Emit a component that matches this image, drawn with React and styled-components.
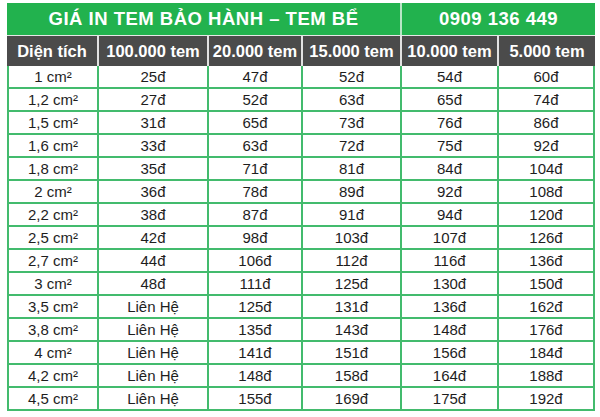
import React from "react";
import styled, { createGlobalStyle } from "styled-components";

const GlobalStyle = createGlobalStyle`
  body {
    margin: 0;
    background: #ffffff;
    font-family: "Liberation Sans", Arial, sans-serif;
  }
`;

const GREEN = "#22b24e";
const LINE = "#43bb6d";
const GRAY = "#4b4b4b";

const columns = ["Diện tích", "100.000 tem", "20.000 tem", "15.000 tem", "10.000 tem", "5.000 tem"];
const widths = [92, 110, 94, 99, 97, 96];

const rows = [
  ["1 cm²", "25đ", "47đ", "52đ", "54đ", "60đ"],
  ["1,2 cm²", "27đ", "52đ", "63đ", "65đ", "74đ"],
  ["1,5 cm²", "31đ", "65đ", "73đ", "76đ", "86đ"],
  ["1,6 cm²", "33đ", "63đ", "72đ", "75đ", "92đ"],
  ["1,8 cm²", "35đ", "71đ", "81đ", "84đ", "104đ"],
  ["2 cm²", "36đ", "78đ", "89đ", "92đ", "108đ"],
  ["2,2 cm²", "38đ", "87đ", "91đ", "94đ", "120đ"],
  ["2,5 cm²", "42đ", "98đ", "103đ", "107đ", "126đ"],
  ["2,7 cm²", "44đ", "106đ", "112đ", "116đ", "136đ"],
  ["3 cm²", "48đ", "111đ", "125đ", "130đ", "150đ"],
  ["3,5 cm²", "Liên Hệ", "125đ", "131đ", "136đ", "162đ"],
  ["3,8 cm²", "Liên Hệ", "135đ", "143đ", "148đ", "176đ"],
  ["4 cm²", "Liên Hệ", "141đ", "151đ", "156đ", "184đ"],
  ["4,2 cm²", "Liên Hệ", "148đ", "158đ", "164đ", "188đ"],
  ["4,5 cm²", "Liên Hệ", "155đ", "169đ", "175đ", "192đ"],
];

const Page = styled.div`
  padding: 3px 0 0 7px;
`;

const Table = styled.table`
  border-collapse: separate;
  border-spacing: 0;
  table-layout: fixed;
  width: 588px;
`;

const TitleCell = styled.th`
  background: ${GREEN};
  color: #ffffff;
  font-size: 18.5px;
  font-weight: 700;
  letter-spacing: 0.5px;
  height: 32px;
  padding: 0;
  box-sizing: border-box;
  text-align: center;
  border-right: ${(p) => (p.$last ? "none" : "2px solid #b8e6c6")};
`;

const HeadCell = styled.th`
  background: ${GRAY};
  color: #ffffff;
  font-size: 16.5px;
  font-weight: 700;
  height: 31px;
  padding: 0;
  box-sizing: border-box;
  text-align: center;
  white-space: nowrap;
  border-top: 1px solid #e6e6e6;
  border-right: ${(p) => (p.$last ? "none" : "2px solid #e2e2e2")};
`;

const Cell = styled.td`
  color: #1e1e1e;
  font-size: 15px;
  height: 23px;
  padding: 0;
  box-sizing: border-box;
  text-align: center;
  border-right: 2px solid ${LINE};
  border-bottom: 2px solid ${LINE};
  border-left: ${(p) => (p.$first ? `2px solid ${LINE}` : "none")};
`;

export default function App() {
  return (
    <>
      <GlobalStyle />
      <Page>
        <Table>
          <colgroup>
            {widths.map((w, i) => (
              <col key={i} style={{ width: w }} />
            ))}
          </colgroup>
          <thead>
            <tr>
              <TitleCell colSpan={4}>GIÁ IN TEM BẢO HÀNH – TEM BỂ</TitleCell>
              <TitleCell colSpan={2} $last>
                0909 136 449
              </TitleCell>
            </tr>
            <tr>
              {columns.map((c, i) => (
                <HeadCell key={c} $last={i === columns.length - 1}>
                  {c}
                </HeadCell>
              ))}
            </tr>
          </thead>
          <tbody>
            {rows.map((r) => (
              <tr key={r[0]}>
                {r.map((v, i) => (
                  <Cell key={i} $first={i === 0}>
                    {v}
                  </Cell>
                ))}
              </tr>
            ))}
          </tbody>
        </Table>
      </Page>
    </>
  );
}
